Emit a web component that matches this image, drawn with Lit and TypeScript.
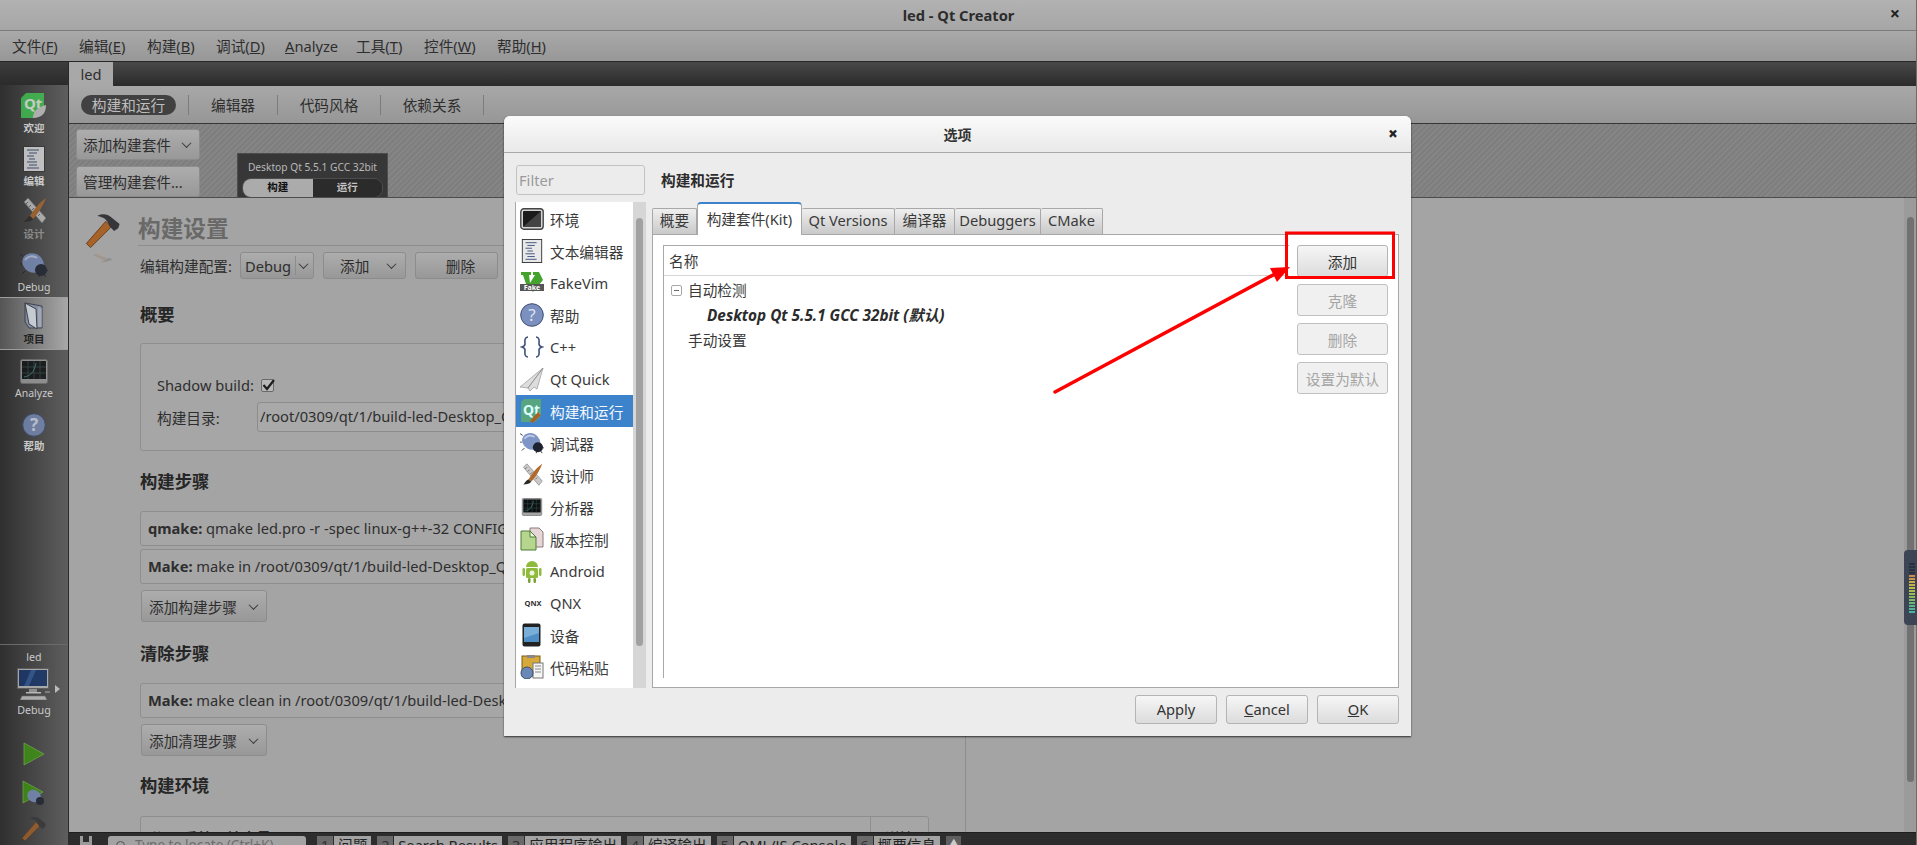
import { LitElement, html, css, svg } from "lit";
import { customElement } from "lit/decorators.js";

const icon = (w: number, h: number, vb: string, body: unknown) => html`<svg width=${w} height=${h} viewBox=${vb}>${body}</svg>`;

const qtLogo = (w = 26, h = 26) =>
  icon(w, h, "0 0 26 26", svg`
    <path d="M5 0h18v13l-9 12H0V5z" fill="#41cd52" />
    <text x="3" y="16" font-family="Noto Sans" font-weight="700" font-size="15" fill="#eef8ee">Qt</text>
    <path d="M12 25c0-7 5-11 13-13 0 8-4 13-13 13z" fill="#d0d0d0" />
  `);

const docIcon = (w = 22, h = 26) =>
  icon(w, h, "0 0 22 26", svg`
    <rect x=".5" y=".5" width="21" height="25" fill="#e8e8e8" stroke="#333" />
    <path d="M4 4h12M6 7h8M4 10h7M6 13h6M4 16h10M6 19h8M4 22h12" stroke="#3b4f7c" stroke-width="1" />
  `);

const designIcon = (w = 26, h = 28) =>
  icon(w, h, "0 0 26 28", svg`
    <path d="M3 5l4-4 18 20-4 5z" fill="#c9c9c9" stroke="#777" stroke-width=".7" />
    <path d="M5 7l2-2M8 10l2-2M11 13l2-2M14 16l2-2M17 19l2-2" stroke="#666" />
    <path d="M25 1C19 5 13 12 9 19l3 3C17 17 22 9 25 1z" fill="#b06a2c" />
    <path d="M9 19c-3 1-4 4-6 6 4 0 8-1 9-3z" fill="#2a2a2a" />
  `);

const bugIcon = (w = 28, h = 26) =>
  icon(w, h, "0 0 28 26", svg`
    <path d="M3 4l-3-2M2 12H0M5 19l-3 3M20 21l-1 4M25 17l3 2M24 22l2 3" stroke="#222" stroke-width="1" fill="none" />
    <ellipse cx="13" cy="11" rx="11" ry="9.5" fill="#7f95c6" transform="rotate(28 13 11)" />
    <path d="M5 8c3-4 8-5 12-2" stroke="#c3cfe9" stroke-width="2" fill="none" />
    <circle cx="21" cy="18" r="6" fill="#1c2230" />
  `);

const folderIcon = (w = 20, h = 28) =>
  icon(w, h, "0 0 20 28", svg`
    <path d="M1 1l17 3v22H5L1 20z" fill="#8795ad" stroke="#2a3140" />
    <path d="M1 1l11 6 1 20-8-5z" fill="#dfe5ee" stroke="#2a3140" />
    <path d="M15 5v20M17 6v19" stroke="#dde" stroke-width=".8" />
  `);

const analyzeIcon = (w = 28, h = 25) =>
  icon(w, h, "0 0 28 25", svg`
    <rect x=".5" y=".5" width="27" height="24" rx="2" fill="#a5a5a5" stroke="#777" />
    <rect x="2" y="2" width="24" height="18" fill="#0d0f10" />
    <path d="M2 8h24M2 14h24M8 2v18M14 2v18M20 2v18" stroke="#2f4a4a" stroke-width=".8" />
    <path d="M4 18c6-1 10-4 12-14" stroke="#3f7f78" fill="none" />
  `);

const helpIcon = (w = 24, h = 24) =>
  icon(w, h, "0 0 24 24", svg`
    <circle cx="12" cy="12" r="11.3" fill="#7b90bf" stroke="#3e4d70" />
    <text x="12" y="18" text-anchor="middle" font-family="Noto Sans" font-size="17" fill="#dde4f2">?</text>
  `);

const monitorIcon = (w = 34, h = 32) =>
  icon(w, h, "0 0 34 32", svg`
    <rect x=".5" y=".5" width="31" height="20" fill="#c8c8c8" stroke="#666" />
    <rect x="2" y="2" width="28" height="16" fill="#13356f" />
    <path d="M14 2l5 0-7 16-5 0z" fill="#2f5a9f" />
    <rect x="12" y="21" width="8" height="3" fill="#aaa" />
    <rect x="9" y="24" width="15" height="1.5" fill="#ddd" />
    <path d="M3 32l2-4h23l2 4z" fill="#cfcfcf" stroke="#777" stroke-width=".6" />
    <path d="M28 24h5" stroke="#ccc" />
  `);

const playIcon = (w = 22, h = 24) =>
  icon(w, h, "0 0 22 24", svg`<path d="M1 1l20 11L1 23z" fill="#3d9a0e" stroke="#86c55a" stroke-width=".7" />`);

const debugPlayIcon = () =>
  icon(24, 26, "0 0 24 26", svg`
    <path d="M1 1l20 11L1 23z" fill="#3d9a0e" stroke="#86c55a" stroke-width=".7" />
    <ellipse cx="12" cy="16" rx="7" ry="6" fill="#7f95c6" transform="rotate(28 12 16)" />
    <circle cx="18" cy="21" r="4" fill="#1c2230" />
  `);

const hammerIcon = (w = 26, h = 26) =>
  icon(w, h, "0 0 26 26", svg`
    <path d="M1 22L15 6l4 4L4 25z" fill="#a7622a" stroke="#5d3412" stroke-width=".6" />
    <path d="M9 2c4-2 8-1 11 2l5 4-1 3-3 2-3-3-2-4C14 3 11 3 9 2z" fill="#36363a" />
  `);

const envIcon = () =>
  icon(24, 22, "0 0 24 22", svg`
    <rect x=".8" y=".8" width="22.4" height="20.4" rx="3" fill="#d5d5d5" stroke="#444" stroke-width="1.4" />
    <rect x="3" y="3" width="18" height="16" rx="1" fill="#1b1b1b" />
    <path d="M3 19L21 3v16z" fill="#444" />
  `);

const fakeVimIcon = () =>
  icon(24, 24, "0 0 24 24", svg`
    <path d="M6 13L13 21l10-12-4-8H13v3h2L10 12 9 4h2V1H1v3h2z" fill="#43a32d" />
    <rect x="0" y="13" width="24" height="7" fill="#555" />
    <text x="12" y="19" text-anchor="middle" font-family="Noto Sans" font-size="7" font-weight="700" fill="#fff">Fake</text>
  `);

const cppIcon = () =>
  icon(24, 24, "0 0 24 24", svg`
    <path d="M8 2C4 2 5 7 5 9s-3 3-3 3 3 1 3 3-1 7 3 7M16 2c4 0 3 5 3 7s3 3 3 3-3 1-3 3 1 7-3 7" stroke="#3e4f78" stroke-width="1.6" fill="none" />
  `);

const quickIcon = () =>
  icon(24, 24, "0 0 24 24", svg`
    <path d="M23 1L0 20l8 1zM23 1L8 21l2 3 4-4 3 2z" fill="#ddd" stroke="#888" stroke-width=".6" />
  `);

const buildRunIcon = () =>
  icon(24, 24, "0 0 24 24", svg`
    <path d="M4 0h17v17l-6 6H1V3z" fill="#57a47f" />
    <text x="3" y="16" font-family="Noto Sans" font-weight="700" font-size="14" fill="#dff">Qt</text>
    <path d="M10 22l8-9 3 3-8 8z" fill="#a7622a" />
  `);

const vcsIcon = () =>
  icon(24, 24, "0 0 24 24", svg`
    <path d="M10 1h9l4 4v15H10z" fill="#e6d6d6" stroke="#8b7b7b" />
    <path d="M1 4h9l6 6v13H1z" fill="#b5d68c" stroke="#4c7c3c" />
    <path d="M10 4v6h6z" fill="#eef7de" stroke="#4c7c3c" />
  `);

const androidIcon = () =>
  icon(24, 24, "0 0 24 24", svg`
    <path d="M6 8a6 6 0 0 1 12 0z" fill="#8fbb3c" />
    <rect x="6" y="9" width="12" height="10" rx="1.5" fill="#8fbb3c" />
    <rect x="2.5" y="9" width="2.5" height="8" rx="1.2" fill="#8fbb3c" />
    <rect x="19" y="9" width="2.5" height="8" rx="1.2" fill="#8fbb3c" />
    <rect x="8" y="19" width="2.5" height="5" rx="1.2" fill="#7aa22f" />
    <rect x="13.5" y="19" width="2.5" height="5" rx="1.2" fill="#7aa22f" />
    <circle cx="12" cy="14" r="2.5" fill="#eef5dd" />
  `);

const qnxIcon = () =>
  html`<svg width="24" height="10" viewBox="0 0 24 10"><rect x="0" y="1" width="24" height="8" fill="#fff" /><text x="13" y="8.4" text-anchor="middle" font-family="Noto Sans" font-weight="700" font-size="7.5" fill="#333">QNX</text></svg>`;

const deviceIcon = () =>
  icon(20, 24, "0 0 20 24", svg`
    <rect x=".5" y=".5" width="18" height="23" rx="2" fill="#222" />
    <rect x="2" y="4" width="15" height="15" fill="#4f8ec4" />
    <path d="M2 4h15v6L2 15z" fill="#78aed8" />
  `);

const pasteIcon = () =>
  icon(24, 24, "0 0 24 24", svg`
    <rect x="2" y="1" width="18" height="20" fill="#d6a93a" stroke="#7a5d18" />
    <rect x="7" y="0" width="8" height="3" fill="#888" />
    <rect x="13" y="8" width="10" height="15" fill="#f5f5f5" stroke="#777" />
    <path d="M15 11h6M15 14h6M15 17h6" stroke="#888" />
    <circle cx="7" cy="18" r="6" fill="#6a88b5" stroke="#3c4e6e" />
  `);

const MENU = [
  { width: 67, label: html`文件(<u>F</u>)` },
  { width: 68, label: html`编辑(<u>E</u>)` },
  { width: 69, label: html`构建(<u>B</u>)` },
  { width: 69, label: html`调试(<u>D</u>)` },
  { width: 71, label: html`<u>A</u>nalyze` },
  { width: 68, label: html`工具(<u>T</u>)` },
  { width: 73, label: html`控件(<u>W</u>)` },
  { width: 70, label: html`帮助(<u>H</u>)` },
];

const LIST = [
  { label: "环境", icon: envIcon() },
  { label: "文本编辑器", icon: docIcon(22, 24) },
  { label: "FakeVim", icon: fakeVimIcon() },
  { label: "帮助", icon: helpIcon() },
  { label: "C++", icon: cppIcon() },
  { label: "Qt Quick", icon: quickIcon() },
  { label: "构建和运行", icon: buildRunIcon(), selected: true },
  { label: "调试器", icon: bugIcon(24, 22) },
  { label: "设计师", icon: designIcon(24, 24) },
  { label: "分析器", icon: analyzeIcon(22, 18) },
  { label: "版本控制", icon: vcsIcon() },
  { label: "Android", icon: androidIcon() },
  { label: "QNX", icon: qnxIcon() },
  { label: "设备", icon: deviceIcon() },
  { label: "代码粘贴", icon: pasteIcon() },
];

const OUTPUT_TABS = [
  ["1", "问题"],
  ["2", "Search Results"],
  ["3", "应用程序输出"],
  ["4", "编译输出"],
  ["5", "QML/JS Console"],
  ["6", "概要信息"],
];

const LEVELS = ["#2a3040", "#2a3040", "#2a3040", "#2a3040", "#c98a4e", "#c9964a", "#c9a845", "#c4b548", "#bcbc4c", "#a9bb50", "#9abc58", "#8ab860", "#7eb86a", "#6db578", "#5db388", "#4fb498", "#44b6a6"];

@customElement("app-root")
export class AppRoot extends LitElement {
  static styles = css`
    :host {
      display: block;
      position: relative;
      width: 1917px;
      height: 845px;
      overflow: hidden;
      font-family: "Noto Sans", "Noto Sans CJK SC", sans-serif;
      font-size: 14.67px;
      color: #2e2e2e;
      background: #a4a4a4;
    }

    .page {
      display: flex;
      flex-direction: column;
      height: 845px;
    }

    .titlebar {
      height: 30px;
      flex: none;
      position: relative;
      display: flex;
      align-items: center;
      justify-content: center;
      background: linear-gradient(#b2b2b2, #a6a6a6);
      border-bottom: 1px solid #7c7c7c;
      font-weight: 700;
      font-size: 14.67px;
      color: #2c2c2c;
    }

    .win-close {
      position: absolute;
      right: 17px;
      top: 4px;
      font-size: 18px;
      font-weight: 700;
      line-height: 18px;
      color: #222;
    }

    .menubar {
      height: 30px;
      flex: none;
      display: flex;
      align-items: center;
      padding-left: 2px;
      background: linear-gradient(#a9a9a9, #979797);
      border-bottom: 1px solid #262626;
    }

    .menubar span {
      box-sizing: border-box;
      padding-left: 10px;
      line-height: 20px;
      white-space: nowrap;
      flex: none;
    }

    .workspace {
      flex: 1;
      display: flex;
      min-height: 0;
    }

    .sidebar {
      width: 68px;
      flex: none;
      display: flex;
      flex-direction: column;
      background: linear-gradient(90deg, #2f2f2f, #5e5e5e);
      border-right: 1px solid #2a2a2a;
      color: #c9c9c9;
    }

    .side-top {
      height: 23px;
      flex: none;
      background: linear-gradient(#3d3d3d, #2b2b2b);
    }

    .mode {
      height: 53px;
      flex: none;
      box-sizing: border-box;
      display: flex;
      flex-direction: column;
      align-items: center;
      justify-content: flex-end;
      padding-bottom: 3px;
      gap: 2px;
      font-size: 10.5px;
      line-height: 14px;
      font-weight: 700;
    }

    .mode svg {
      display: block;
    }

    .mode.latin {
      font-weight: 400;
    }

    .mode.disabled {
      color: #8a8a8a;
    }

    .mode.active {
      background: linear-gradient(90deg, #555, #a8a8a8);
      border-top: 1px solid #9d9d9d;
      border-bottom: 1px solid #9d9d9d;
      color: #222;
    }

    .side-dim {
      opacity: 0.75;
      display: block;
    }

    .side-spacer {
      flex: 1;
    }

    .side-bottom {
      height: 201px;
      flex: none;
      box-sizing: border-box;
      border-top: 1px solid #6a6a6a;
      display: flex;
      flex-direction: column;
      align-items: center;
      font-size: 10.67px;
      padding-top: 5px;
    }

    .side-bottom svg {
      display: block;
    }

    .target {
      position: relative;
      margin: 4px 0 3px;
    }

    .target::after {
      content: "";
      position: absolute;
      left: 38px;
      top: 17px;
      border-left: 5px solid #bbb;
      border-top: 4px solid transparent;
      border-bottom: 4px solid transparent;
    }

    .run {
      margin-top: 25px;
    }

    .run + .run {
      margin-top: 14px;
    }

    .run + .run + .run {
      margin-top: 10px;
    }

    .main {
      flex: 1;
      min-width: 0;
      display: flex;
      flex-direction: column;
      position: relative;
    }

    .tabstrip {
      height: 24px;
      flex: none;
      box-sizing: border-box;
      background: linear-gradient(#484848, #2b2b2b);
    }

    .tabstrip span {
      display: flex;
      align-items: center;
      justify-content: center;
      width: 44px;
      height: 24px;
      background: #a8a8a8;
    }

    .minitabs {
      height: 38px;
      flex: none;
      box-sizing: border-box;
      display: flex;
      align-items: center;
      padding-left: 12px;
      background: linear-gradient(#a8a8a8, #969696);
      border-bottom: 1px solid #363636;
    }

    .pill {
      width: 95px;
      height: 20px;
      border-radius: 10px;
      background: #414141;
      color: #bdbdbd;
      display: flex;
      align-items: center;
      justify-content: center;
      line-height: 20px;
      flex: none;
    }

    .minitab {
      box-sizing: border-box;
      display: flex;
      align-items: center;
      justify-content: center;
      height: 20px;
      flex: none;
      border-left: 1px solid #7c7c7c;
      margin-left: 12px;
      width: 89px;
    }

    .minitab.mid {
      margin-left: 0;
      width: 103px;
    }

    .minitab.end {
      margin-left: 0;
      width: 104px;
      border-right: 1px solid #7c7c7c;
    }

    .band {
      height: 74px;
      flex: none;
      box-sizing: border-box;
      display: flex;
      padding: 5px 0 0 7px;
      gap: 37px;
      background: repeating-linear-gradient(135deg, #7e7e7e 0 2px, #858585 2px 4px);
      border-bottom: 1px solid #4c4c4c;
    }

    .kit-buttons {
      display: flex;
      flex-direction: column;
      gap: 6px;
    }

    .btn {
      box-sizing: border-box;
      display: flex;
      align-items: center;
      justify-content: space-between;
      border: 1px solid #8c8c8c;
      border-radius: 3px;
      background: linear-gradient(#adadad, #989898);
      padding: 0 7px;
      white-space: nowrap;
      flex: none;
    }

    .btn.center {
      justify-content: center;
    }

    .chev {
      width: 6px;
      height: 6px;
      border-right: 1.5px solid #3c3c3c;
      border-bottom: 1.5px solid #3c3c3c;
      transform: rotate(45deg) translate(-1px, -1px);
      flex: none;
      margin-right: 2px;
    }

    .kit-add {
      width: 124px;
      height: 31px;
      padding: 0 7px 0 6px;
    }

    .kit-selector {
      align-self: flex-end;
      box-sizing: border-box;
      width: 151px;
      height: 44px;
      background: #373737;
      border: 1px solid #4d4d4d;
      border-bottom: none;
      padding: 5px 4px 0;
      color: #b9b9b9;
      font-size: 10.2px;
      text-align: center;
      line-height: 16px;
      white-space: nowrap;
    }

    .kit-switch {
      display: flex;
      height: 18px;
      margin-top: 3px;
      border: 1px solid #4d4d4d;
      border-radius: 9px;
      overflow: hidden;
      font-size: 10.5px;
      font-weight: 700;
      line-height: 17px;
    }

    .kit-switch span {
      flex: 1;
    }

    .kit-switch .on {
      background: #ababab;
      color: #111;
    }

    .kit-switch .off {
      background: #2b2b2b;
      color: #c4c4c4;
    }

    .below {
      flex: 1;
      min-height: 0;
      display: flex;
      overflow: hidden;
    }

    .left-pane {
      width: 897px;
      flex: none;
      box-sizing: border-box;
      display: flex;
      border-right: 1px solid #8d8d8d;
      overflow: hidden;
    }

    .hammer-col {
      width: 71px;
      flex: none;
      box-sizing: border-box;
      padding: 15px 0 0 15px;
    }

    .hammer-col svg {
      display: block;
    }

    .reflect {
      transform: scaleY(-0.45);
      opacity: 0.18;
      margin-top: -1px;
    }

    .settings {
      width: 789px;
      flex: none;
      display: flex;
      flex-direction: column;
    }

    .settings-title {
      height: 48px;
      flex: none;
      box-sizing: border-box;
      font-size: 22.67px;
      font-weight: 700;
      line-height: 62px;
      color: #696969;
      border-bottom: 1px solid #8d8d8d;
      margin-left: -2px;
    }

    .config-row {
      height: 27px;
      flex: none;
      margin-top: 6px;
      display: flex;
      align-items: center;
      gap: 9px;
    }

    .config-row .lbl {
      width: 91px;
      flex: none;
      white-space: nowrap;
    }

    .combo {
      height: 27px;
      width: 74px;
      padding: 0 4px;
    }

    .combo .sep {
      border-left: 1px solid #8c8c8c;
      height: 19px;
      width: 0;
    }

    .small-btn {
      height: 27px;
      width: 83px;
      padding: 0 8px 0 16px;
    }

    h3 {
      margin: 0;
      height: 24px;
      flex: none;
      line-height: 24px;
      font-size: 17.33px;
      font-weight: 700;
      color: #262626;
    }

    .box {
      flex: none;
      box-sizing: border-box;
      border: 1px solid #8e8e8e;
      border-radius: 3px;
      background: #a6a6a6;
    }

    .overview {
      height: 108px;
      margin-top: 17px;
      padding: 28px 0 0 16px;
    }

    .form-row {
      display: flex;
      align-items: center;
      height: 26px;
    }

    .form-row + .form-row {
      margin-top: 4px;
      height: 30px;
    }

    .form-row label {
      width: 100px;
      flex: none;
      white-space: nowrap;
    }

    .check {
      width: 13px;
      height: 13px;
      box-sizing: border-box;
      border: 1px solid #6a6a6a;
      border-radius: 2px;
      background: #b8b8b8;
      position: relative;
      flex: none;
      margin-left: 4px;
    }

    .check svg {
      position: absolute;
      left: -1px;
      top: -3px;
    }

    .path {
      box-sizing: border-box;
      width: 640px;
      height: 30px;
      line-height: 26px;
      border: 1px solid #8c8c8c;
      border-radius: 3px;
      padding-left: 2px;
      background: #a9a9a9;
      white-space: nowrap;
      overflow: hidden;
    }

    .step {
      height: 35px;
      line-height: 33px;
      padding-left: 7px;
      white-space: nowrap;
      overflow: hidden;
    }

    .add-step {
      width: 126px;
      height: 32px;
      margin: 6px 0 0 1px;
      padding-left: 7px;
    }

    .env {
      height: 60px;
      margin-top: 19px;
      display: flex;
      justify-content: space-between;
      line-height: 42px;
      padding-left: 9px;
    }

    .env span:last-child {
      width: 58px;
      box-sizing: border-box;
      border-left: 1px solid #8e8e8e;
      text-align: center;
    }

    .scroll {
      margin-left: auto;
      width: 13px;
      flex: none;
      box-sizing: border-box;
      padding-top: 19px;
      background: #9b9b9b;
      display: flex;
      justify-content: center;
      position: relative;
      border-right: 0;
    }

    .scroll b {
      width: 7px;
      height: 565px;
      border-radius: 4px;
      background: #717171;
      display: block;
    }

    .window-edge {
      position: absolute;
      right: 0;
      top: 0;
      width: 1px;
      height: 845px;
      background: #6c6c6c;
    }

    .statusbar {
      height: 13px;
      flex: none;
      box-sizing: border-box;
      display: flex;
      padding: 3px 0 0 11px;
      background: #2d2d2d;
      border-top: 1px solid #1e1e1e;
      overflow: hidden;
      align-items: flex-start;
    }

    .status-icon {
      width: 12px;
      height: 12px;
      background: #9a9a9a;
      flex: none;
      margin-right: 16px;
      position: relative;
    }

    .status-icon::after {
      content: "";
      position: absolute;
      left: 3px;
      top: 0;
      width: 6px;
      height: 6px;
      background: #2d2d2d;
    }

    .locator {
      width: 198px;
      height: 24px;
      flex: none;
      box-sizing: border-box;
      border-radius: 3px;
      background: #a3a3a3;
      color: #6c6c6c;
      line-height: 18px;
      padding-left: 27px;
      margin-right: 11px;
      white-space: nowrap;
      overflow: hidden;
      font-size: 13.5px;
      position: relative;
    }

    .locator::before {
      content: "";
      position: absolute;
      left: 8px;
      top: 5px;
      width: 7px;
      height: 7px;
      border: 1.5px solid #555;
      border-radius: 50%;
    }

    .out-tab {
      display: flex;
      flex: none;
      height: 24px;
      line-height: 19px;
      margin-right: 6px;
    }

    .out-tab i {
      font-style: normal;
      width: 16px;
      text-align: center;
      background: #6a6a6a;
      color: #333;
      margin-right: 1px;
    }

    .out-tab span {
      background: #a3a3a3;
      padding: 0 4px;
      white-space: nowrap;
      color: #222;
    }

    .out-arrow {
      width: 15px;
      height: 24px;
      background: #5e5e5e;
      flex: none;
      color: #ccc;
      font-size: 9px;
      line-height: 14px;
      text-align: center;
    }

    .meter {
      position: absolute;
      left: 1904px;
      top: 550px;
      width: 13px;
      height: 75px;
      box-sizing: border-box;
      border-radius: 4px 0 0 4px;
      background: #3d4555;
      padding: 13px 2px 0 5px;
      display: flex;
      flex-direction: column;
      gap: 1px;
    }

    .meter i {
      height: 2px;
      flex: none;
    }

    .dialog {
      position: absolute;
      left: 504px;
      top: 116px;
      width: 907px;
      height: 620px;
      box-sizing: border-box;
      background: #ececec;
      border-radius: 6px 6px 0 0;
      box-shadow: 0 1px 2px rgba(0, 0, 0, 0.7);
      display: flex;
      flex-direction: column;
    }

    .dlg-title {
      height: 37px;
      flex: none;
      box-sizing: border-box;
      display: flex;
      align-items: center;
      justify-content: center;
      position: relative;
      background: linear-gradient(#fbfbfb, #e9e9e9);
      border-bottom: 1px solid #a8a8a8;
      border-radius: 6px 6px 0 0;
      font-weight: 700;
      font-size: 14px;
      color: #333;
    }

    .dlg-title b {
      position: absolute;
      right: 13px;
      top: 8px;
      font-size: 17px;
      line-height: 20px;
      color: #222;
    }

    .dlg-body {
      flex: 1;
      min-height: 0;
      display: flex;
      padding: 12px 12px 0 11px;
      gap: 6px;
      color: #3a3a3a;
    }

    .dlg-left {
      width: 131px;
      flex: none;
      display: flex;
      flex-direction: column;
      gap: 7px;
    }

    .filter {
      box-sizing: border-box;
      height: 30px;
      margin-left: 1px;
      width: 129px;
      border: 1px solid #c2c2c2;
      border-radius: 3px;
      background: #ececec;
      color: #9a9a9a;
      padding-left: 2px;
      line-height: 28px;
    }

    .list {
      height: 486px;
      box-sizing: border-box;
      display: flex;
      background: #fff;
      border-left: 1px solid #a8a8a8;
    }

    .list-rows {
      flex: 1;
      min-width: 0;
      padding-top: 1px;
    }

    .row {
      height: 32px;
      display: flex;
      align-items: center;
      gap: 6px;
      padding-left: 4px;
      white-space: nowrap;
    }

    .row > span {
      width: 24px;
      display: flex;
      justify-content: center;
      flex: none;
    }

    .row svg {
      display: block;
    }

    .row.selected {
      background: #3d83cc;
      color: #f4f8fc;
    }

    .list-scroll {
      width: 13px;
      flex: none;
      background: #d6d6d6;
      display: flex;
      flex-direction: column;
      align-items: center;
      padding-top: 16px;
      box-sizing: border-box;
      position: relative;
    }

    .list-scroll b {
      width: 7px;
      height: 428px;
      border-radius: 4px;
      background: #a1a1a1;
      display: block;
    }

    .dlg-right {
      flex: 1;
      min-width: 0;
      display: flex;
      flex-direction: column;
    }

    .dlg-head {
      height: 30px;
      flex: none;
      padding-left: 9px;
      font-weight: 700;
      font-size: 14.67px;
      line-height: 30px;
      color: #2c2c2c;
    }

    .tabs {
      margin-top: 7px;
      height: 32px;
      flex: none;
      display: flex;
      align-items: flex-end;
    }

    .tab {
      box-sizing: border-box;
      height: 26px;
      line-height: 22px;
      text-align: center;
      background: linear-gradient(#efefef, #c9c9c9);
      border: 1px solid #a8a8a8;
      border-left: none;
      border-bottom: none;
      border-radius: 2px 2px 0 0;
      white-space: nowrap;
    }

    .tab:first-child {
      border-left: 1px solid #a8a8a8;
    }

    .tab.current {
      line-height: 31px;
      background: #fff;
      border-top: 2px solid #3d83cc;
      border-left: 1px solid #a8a8a8;
      position: relative;
      z-index: 1;
      margin-bottom: -1px;
      border-radius: 4px 4px 0 0;
      height: 33px;
    }

    .panel {
      box-sizing: border-box;
      height: 454px;
      width: 747px;
      flex: none;
      background: #fff;
      border: 1px solid #a8a8a8;
      display: flex;
      padding: 10px 0 9px 10px;
    }

    .tree {
      width: 626px;
      flex: none;
      box-sizing: border-box;
      border-left: 1px solid #a8a8a8;
      border-top: 1px solid #a8a8a8;
    }

    .tree-head {
      height: 30px;
      box-sizing: border-box;
      border-bottom: 1px solid #d6d6d6;
      padding-left: 5px;
      line-height: 30px;
    }

    .tree-row {
      height: 25px;
      line-height: 25px;
      padding-left: 24px;
      position: relative;
      white-space: nowrap;
    }

    .tree-row:nth-child(2) {
      margin-top: 2px;
    }

    .tree-row.kit {
      padding-left: 43px;
      font-style: italic;
      font-weight: 700;
      color: #2c2c2c;
      font-size: 15.3px;
    }

    .expander {
      position: absolute;
      left: 7px;
      top: 7px;
      width: 9px;
      height: 9px;
      border: 1px solid #a8a8a8;
      border-radius: 2px;
    }

    .expander::after {
      content: "";
      position: absolute;
      left: 2px;
      top: 4px;
      width: 5px;
      height: 1px;
      background: #666;
    }

    .side-buttons {
      flex: none;
      margin-left: 8px;
      width: 91px;
      display: flex;
      flex-direction: column;
      gap: 7px;
    }

    .side-buttons .btn,
    .dlg-actions .btn {
      justify-content: center;
      padding: 0;
      border-color: #b4b4b4;
      background: linear-gradient(#f6f6f6, #dcdcdc);
      color: #333;
    }

    .side-buttons .btn {
      height: 32px;
    }

    .side-buttons .btn.disabled {
      background: #f0f0f0;
      color: #a5a5a5;
      border-color: #c0c0c0;
    }

    .dlg-actions {
      height: 48px;
      flex: none;
      display: flex;
      justify-content: flex-end;
      gap: 9px;
      padding: 7px 12px 0 0;
      box-sizing: border-box;
    }

    .dlg-actions .btn {
      width: 82px;
      height: 29px;
      padding-bottom: 2px;
    }

    .marks {
      position: absolute;
      left: 0;
      top: 0;
      pointer-events: none;
    }
  `;

  protected render() {
    return html`
      <div class="page">
        <div class="titlebar">led - Qt Creator<span class="win-close">×</span></div>
        <div class="menubar">
          ${MENU.map((m) => html`<span style="width:${m.width}px">${m.label}</span>`)}
        </div>
        <div class="workspace">
          ${this.renderSidebar()}
          <div class="main">
            <div class="tabstrip"><span>led</span></div>
            <div class="minitabs">
              <div class="pill">构建和运行</div>
              <div class="minitab">编辑器</div>
              <div class="minitab mid">代码风格</div>
              <div class="minitab end">依赖关系</div>
            </div>
            <div class="band">
              <div class="kit-buttons">
                <div class="btn kit-add">添加构建套件<i class="chev"></i></div>
                <div class="btn kit-add">管理构建套件...</div>
              </div>
              <div class="kit-selector">
                Desktop Qt 5.5.1 GCC 32bit
                <div class="kit-switch"><span class="on">构建</span><span class="off">运行</span></div>
              </div>
            </div>
            <div class="below">
              ${this.renderSettings()}
              <div class="scroll"><b></b></div>
            </div>
            <div class="statusbar">
              <div class="status-icon"></div>
              <div class="locator">Type to locate (Ctrl+K)</div>
              ${OUTPUT_TABS.map(([n, label]) => html`<div class="out-tab"><i>${n}</i><span>${label}</span></div>`)}
              <div class="out-arrow">▲</div>
            </div>
          </div>
        </div>
      </div>
      <div class="window-edge"></div>
      <div class="meter">${LEVELS.map((c) => html`<i style="background:${c}"></i>`)}</div>
      ${this.renderDialog()}
      <svg class="marks" width="1917" height="845">
        <rect x="1286.5" y="233" width="107" height="44.5" fill="none" stroke="#ff0000" stroke-width="3" />
        <path d="M1055 392L1275 274" stroke="#ff0000" stroke-width="3.5" stroke-linecap="round" />
        <path d="M1290 267L1270 268L1277 282z" fill="#ff0000" />
      </svg>
    `;
  }

  private renderSidebar() {
    return html`
      <div class="sidebar">
        <div class="side-top"></div>
        <div class="mode"><span class="side-dim">${qtLogo(26, 26)}</span>欢迎</div>
        <div class="mode"><span class="side-dim">${docIcon()}</span>编辑</div>
        <div class="mode disabled"><span class="side-dim">${designIcon()}</span>设计</div>
        <div class="mode latin"><span class="side-dim">${bugIcon()}</span>Debug</div>
        <div class="mode active"><span class="side-dim">${folderIcon()}</span>项目</div>
        <div class="mode latin"><span class="side-dim">${analyzeIcon()}</span>Analyze</div>
        <div class="mode"><span class="side-dim">${helpIcon()}</span>帮助</div>
        <div class="side-spacer"></div>
        <div class="side-bottom">
          led
          <div class="target"><span class="side-dim">${monitorIcon()}</span></div>
          Debug
          <div class="run side-dim">${playIcon()}</div>
          <div class="run side-dim">${debugPlayIcon()}</div>
          <div class="run side-dim">${hammerIcon()}</div>
        </div>
      </div>
    `;
  }

  private renderSettings() {
    return html`
      <div class="left-pane">
        <div class="hammer-col">
          ${hammerIcon(38, 36)}
          <div class="reflect">${hammerIcon(38, 20)}</div>
        </div>
        <div class="settings">
          <div class="settings-title">构建设置</div>
          <div class="config-row">
            <span class="lbl">编辑构建配置:</span>
            <div class="btn combo">Debug<i class="sep"></i><i class="chev"></i></div>
            <div class="btn small-btn">添加<i class="chev"></i></div>
            <div class="btn small-btn center">删除</div>
          </div>
          <h3 style="margin-top:23px">概要</h3>
          <div class="box overview">
            <div class="form-row">
              <label>Shadow build:</label>
              <div class="check">
                <svg width="16" height="16" viewBox="0 0 16 16"><path d="M2.5 8l3.5 4 7-9" fill="none" stroke="#1e1e1e" stroke-width="2.2" /></svg>
              </div>
            </div>
            <div class="form-row">
              <label>构建目录:</label>
              <div class="path">/root/0309/qt/1/build-led-Desktop_Qt_5_5_1_GCC_32bit-Debug</div>
            </div>
          </div>
          <h3 style="margin-top:18px">构建步骤</h3>
          <div class="box step" style="margin-top:18px"><b>qmake:</b> qmake led.pro -r -spec linux-g++-32 CONFIG+=debug</div>
          <div class="box step" style="margin-top:3px"><b>Make:</b> make in /root/0309/qt/1/build-led-Desktop_Qt_5_5_1_GCC_32bit-Debug</div>
          <div class="btn add-step">添加构建步骤<i class="chev"></i></div>
          <h3 style="margin-top:19px">清除步骤</h3>
          <div class="box step" style="margin-top:18px"><b>Make:</b> make clean in /root/0309/qt/1/build-led-Desktop_Qt_5_5_1_GCC_32bit-Debug</div>
          <div class="btn add-step">添加清理步骤<i class="chev"></i></div>
          <h3 style="margin-top:17px">构建环境</h3>
          <div class="box env"><span>使用 <b>系统环境变量</b></span><span>详情</span></div>
        </div>
      </div>
    `;
  }

  private renderDialog() {
    return html`
      <div class="dialog">
        <div class="dlg-title">选项<b>×</b></div>
        <div class="dlg-body">
          <div class="dlg-left">
            <div class="filter">Filter</div>
            <div class="list">
              <div class="list-rows">
                ${LIST.map(
                  (item) => html`<div class="row ${item.selected ? "selected" : ""}"><span>${item.icon}</span>${item.label}</div>`
                )}
              </div>
              <div class="list-scroll"><b></b></div>
            </div>
          </div>
          <div class="dlg-right">
            <div class="dlg-head">构建和运行</div>
            <div class="tabs">
              <div class="tab" style="width:45px">概要</div>
              <div class="tab current" style="width:105px">构建套件(Kit)</div>
              <div class="tab" style="width:93px">Qt Versions</div>
              <div class="tab" style="width:60px">编译器</div>
              <div class="tab" style="width:86px">Debuggers</div>
              <div class="tab" style="width:62px">CMake</div>
            </div>
            <div class="panel">
              <div class="tree">
                <div class="tree-head">名称</div>
                <div class="tree-row"><span class="expander"></span>自动检测</div>
                <div class="tree-row kit">Desktop Qt 5.5.1 GCC 32bit (默认)</div>
                <div class="tree-row">手动设置</div>
              </div>
              <div class="side-buttons">
                <div class="btn">添加</div>
                <div class="btn disabled">克隆</div>
                <div class="btn disabled">删除</div>
                <div class="btn disabled">设置为默认</div>
              </div>
            </div>
          </div>
        </div>
        <div class="dlg-actions">
          <div class="btn">Apply</div>
          <div class="btn"><span><u>C</u>ancel</span></div>
          <div class="btn"><span><u>O</u>K</span></div>
        </div>
      </div>
    `;
  }
}
